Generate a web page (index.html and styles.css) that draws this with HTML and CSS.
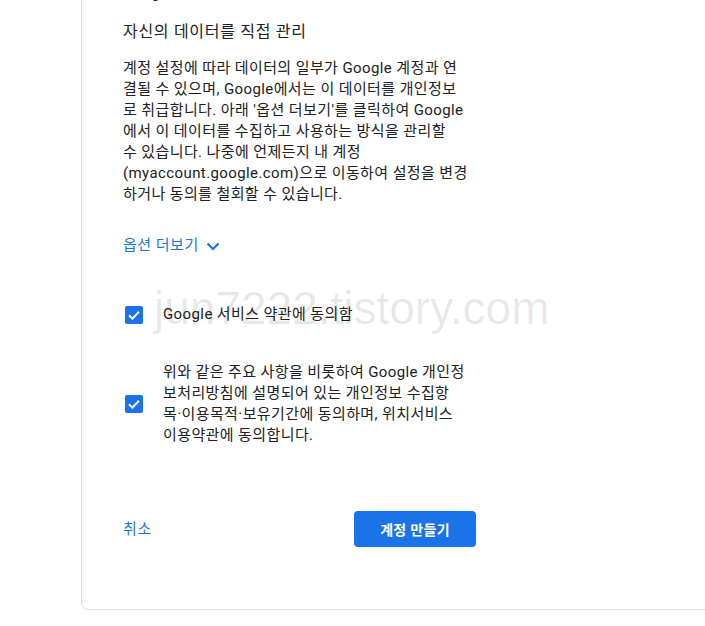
FILE: index.html
```html
<!DOCTYPE html>
<html lang="ko">
<head>
<meta charset="utf-8">
<title>계정 만들기</title>
<link rel="stylesheet" href="styles.css">
</head>
<body>
<div class="card">
  <p class="prev">Google 계정에 저장됩니다.</p>
  <h2 class="heading">자신의 데이터를 직접 관리</h2>
  <p class="body-text">계정 설정에 따라 데이터의 일부가 Google 계정과 연<br>결될 수 있으며, Google에서는 이 데이터를 개인정보<br>로 취급합니다. 아래 '옵션 더보기'를 클릭하여 Google<br>에서 이 데이터를 수집하고 사용하는 방식을 관리할<br>수 있습니다. 나중에 언제든지 내 계정<br>(myaccount.google.com)으로 이동하여 설정을 변경<br>하거나 동의를 철회할 수 있습니다.</p>
  <a class="more" href="#">옵션 더보기<svg class="chev" width="14" height="9" viewBox="0 0 14 9"><path d="M1.5 1.5 L7 7 L12.5 1.5" fill="none" stroke="#1a73e8" stroke-width="2.2"/></svg></a>
  <label class="check-row first">
    <span class="box"><svg width="18" height="18" viewBox="0 0 18 18"><path d="M4 9.3 L7.4 12.6 L14 5.8" fill="none" stroke="#fff" stroke-width="2"/></svg></span>
    <span class="label">Google 서비스 약관에 동의함</span>
  </label>
  <label class="check-row second">
    <span class="box"><svg width="18" height="18" viewBox="0 0 18 18"><path d="M4 9.3 L7.4 12.6 L14 5.8" fill="none" stroke="#fff" stroke-width="2"/></svg></span>
    <span class="label">위와 같은 주요 사항을 비롯하여 Google 개인정<br>보처리방침에 설명되어 있는 개인정보 수집항<br>목·이용목적·보유기간에 동의하며, 위치서비스<br>이용약관에 동의합니다.</span>
  </label>
  <div class="footer">
    <a class="cancel" href="#">취소</a>
    <button class="create" type="button">계정 만들기</button>
  </div>
</div>
<div class="watermark">jun7222.tistory.com</div>
</body>
</html>
```
FILE: styles.css
```css
html, body {
  margin: 0;
  padding: 0;
  background: #fff;
  overflow: hidden;
}
body {
  position: relative;
  width: 705px;
  height: 626px;
  font-family: Roboto, "Noto Sans CJK KR", sans-serif;
  color: #202124;
}
.card {
  margin: -17px 0 0 81px;
  width: 700px;
  border: 1px solid #dadce0;
  border-top: none;
  border-radius: 0 0 0 8px;
  padding: 0 0 62px 41px;
  box-sizing: border-box;
}
.prev {
  margin: 0;
  font-size: 15px;
  line-height: 21px;
  letter-spacing: 0.4px;
  white-space: nowrap;
}
.heading {
  margin: 17px 0 0;
  font-size: 16px;
  font-weight: 400;
  letter-spacing: 0.7px;
  line-height: 21px;
}
.body-text {
  margin: 16px 0 0;
  font-size: 15px;
  line-height: 21px;
  letter-spacing: 0.4px;
  white-space: nowrap;
}
.more {
  display: inline-flex;
  align-items: center;
  gap: 7px;
  margin-top: 30px;
  font-size: 15px;
  line-height: 21px;
  letter-spacing: 0.5px;
  color: #1a73e8;
  text-decoration: none;
}
.chev {
  display: block;
  margin-top: 1px;
}
.check-row {
  display: flex;
  align-items: center;
  gap: 20px;
  margin-left: 2px;
}
.check-row.first {
  margin-top: 48px;
}
.check-row.second {
  margin-top: 37px;
}
.box {
  flex: none;
  width: 18px;
  height: 18px;
  border-radius: 2px;
  background: #1a73e8;
  display: block;
}
.box svg {
  display: block;
}
.label {
  font-size: 15px;
  line-height: 21px;
  letter-spacing: 0.4px;
  white-space: nowrap;
}
.footer {
  display: flex;
  align-items: center;
  justify-content: space-between;
  width: 353px;
  margin-top: 65px;
}
.cancel {
  font-size: 15px;
  font-weight: 400;
  color: #1a73e8;
  text-decoration: none;
  line-height: 21px;
  letter-spacing: 0.6px;
}
.create {
  width: 122px;
  height: 36px;
  border: none;
  border-radius: 4px;
  background: #1a73e8;
  color: #fff;
  font-family: Roboto, "Noto Sans CJK KR", sans-serif;
  font-size: 14px;
  font-weight: 700;
  letter-spacing: 0.3px;
  padding: 0;
}
.watermark {
  position: absolute;
  left: 154px;
  top: 281px;
  font-family: "Liberation Sans", Arial, sans-serif;
  font-size: 46px;
  color: rgba(0, 0, 0, 0.09);
  white-space: nowrap;
  pointer-events: none;
}
```
